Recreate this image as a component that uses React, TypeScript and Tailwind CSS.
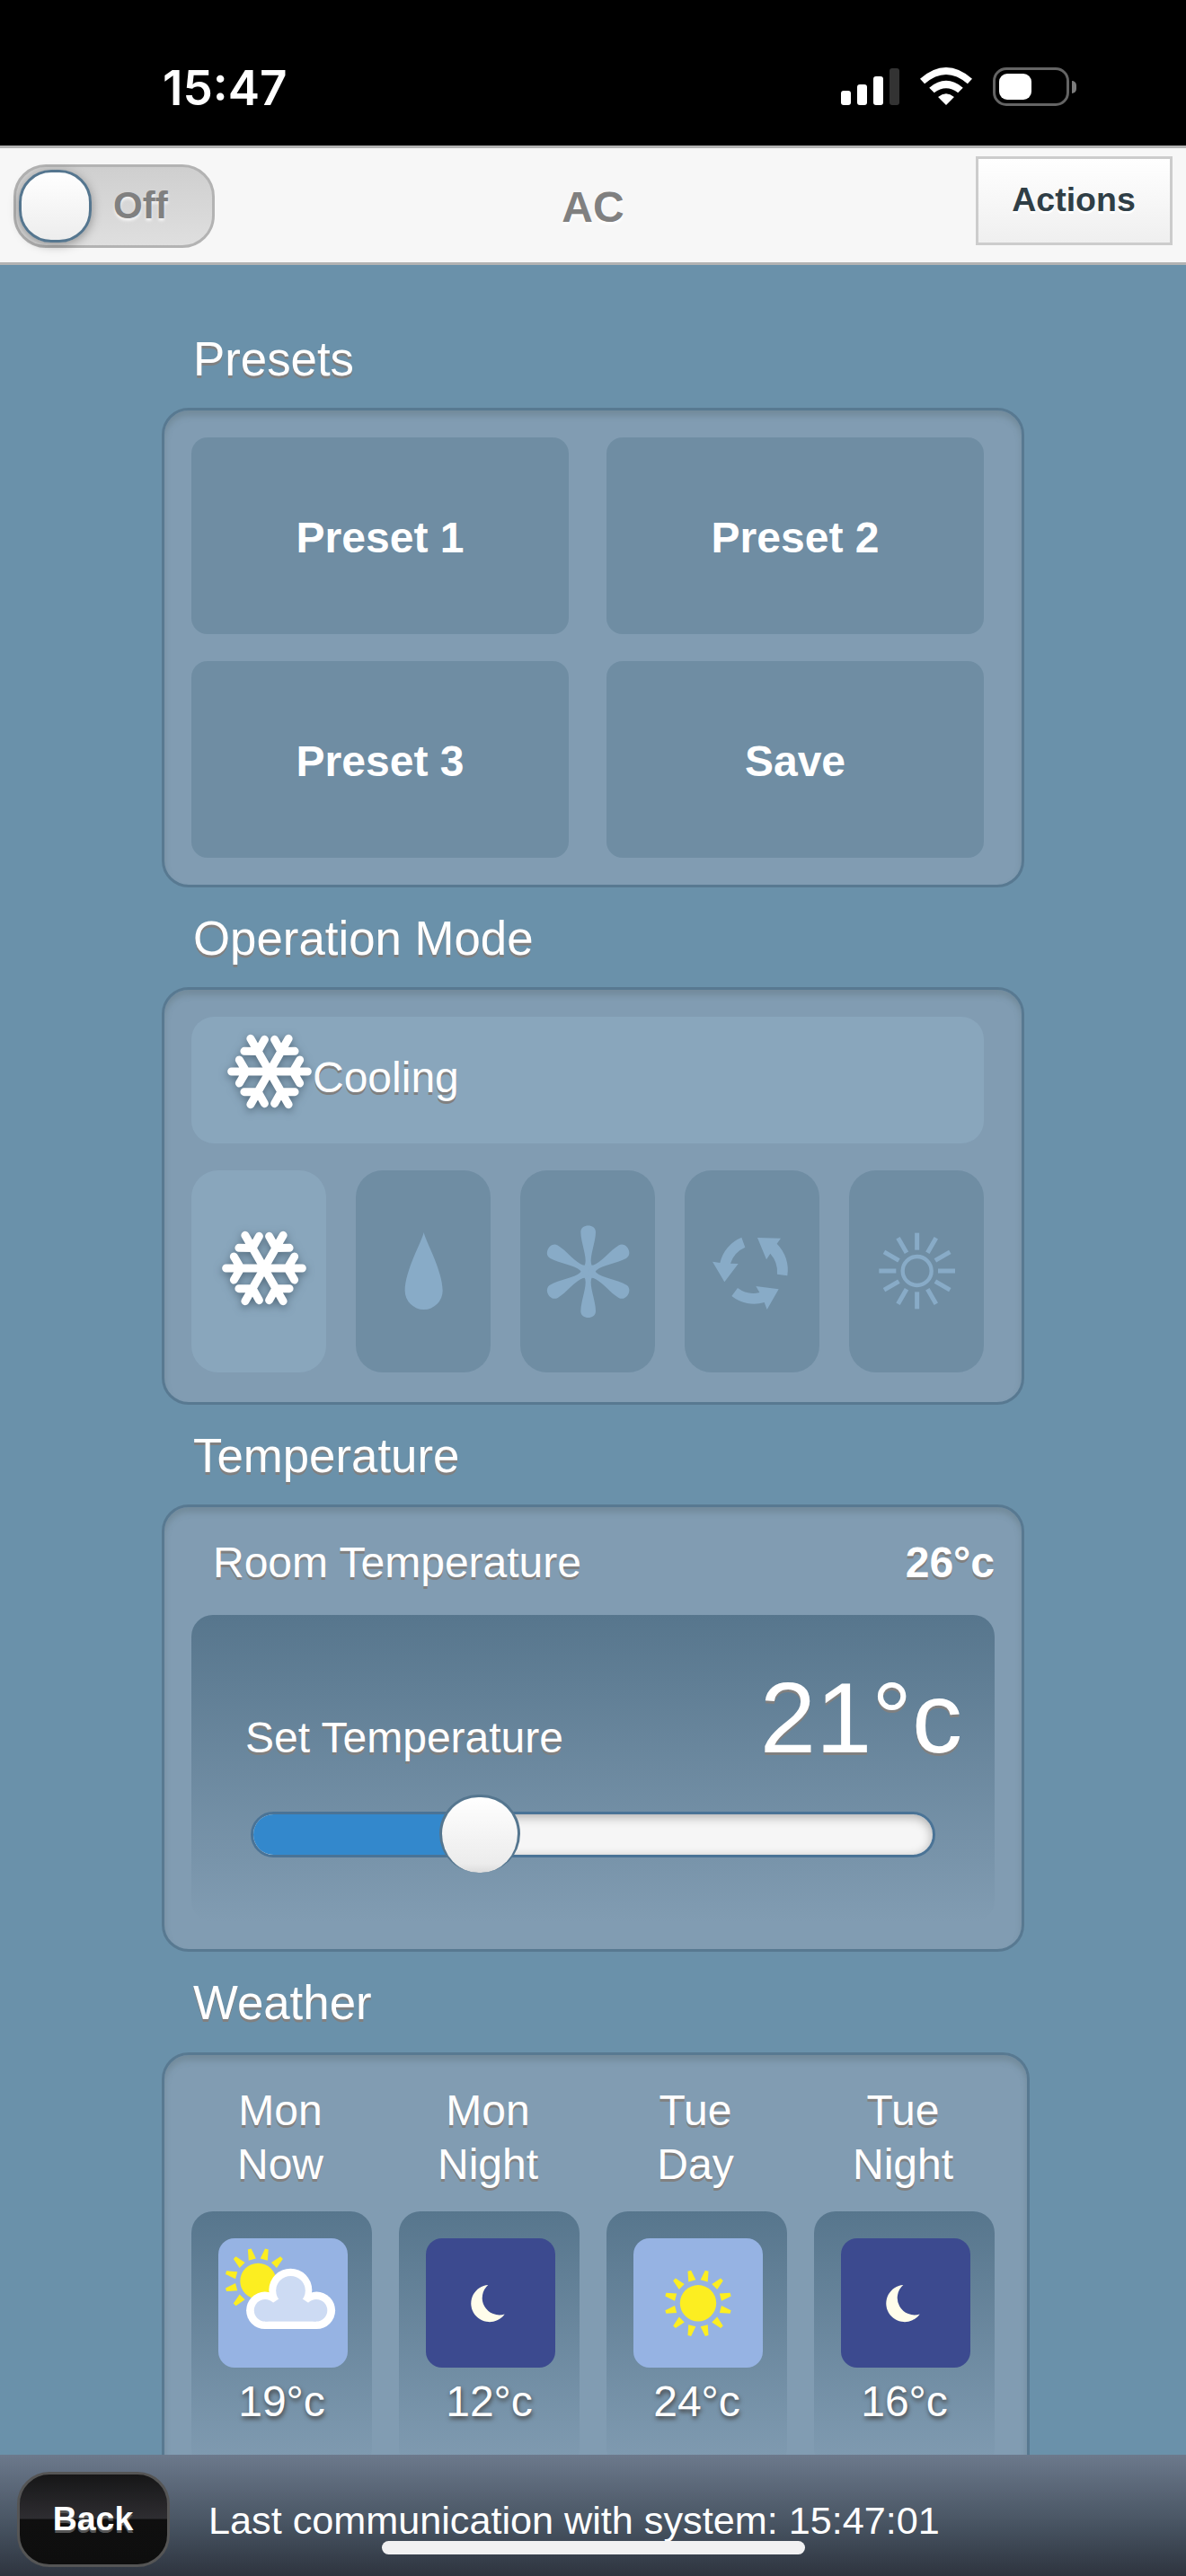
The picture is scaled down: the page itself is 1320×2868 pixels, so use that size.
import React from "react";

const PANEL =
  "rounded-[30px] border-[3px] border-[#587991] bg-[#819cb2] shadow-[inset_0_6px_6px_rgba(90,110,115,0.35)]";
const LABEL_SHADOW = "[text-shadow:0_3px_0_#808080]";

function SectionLabel({ children }: { children: React.ReactNode }) {
  return (
    <h2
      className={`flex h-[111px] shrink-0 items-center pt-[3px] pl-[35px] text-[52.8px] leading-none ${LABEL_SHADOW}`}
    >
      {children}
    </h2>
  );
}

function StatusBar() {
  return (
    <div className="flex h-[162px] shrink-0 items-start justify-between bg-black pr-[122px] pl-[181px]">
      <span className="pt-[67px] font-[Inter] text-[53px] leading-[62px] font-semibold">
        15:47
      </span>
      <div className="flex gap-[23px] pt-[75px]">
        <div className="flex h-[42px] items-end gap-[7px]">
          <span className="h-[16px] w-[11px] rounded-[3px] bg-white" />
          <span className="h-[23px] w-[11px] rounded-[3px] bg-white" />
          <span className="h-[32px] w-[11px] rounded-[3px] bg-white" />
          <span className="h-[41px] w-[11px] rounded-[3px] bg-[#333]" />
        </div>
        <svg className="h-[42px] w-[58px]" viewBox="0 0 136 126" preserveAspectRatio="none" fill="#fff">
          <path d="M0 38Q68-38 136 38L124 55Q68-7 12 55Z" />
          <path d="M24 68Q68 21 112 68L99 85Q68 55 37 85Z" />
          <path d="M47 99Q68 77 89 99L68 126Z" />
        </svg>
        <div className="flex items-center gap-[3px]">
          <div className="h-[43px] w-[85px] rounded-[15px] border-[3px] border-[#646464] p-[4px]">
            <div className="h-[29px] w-[36px] rounded-[9px] bg-white" />
          </div>
          <span className="h-[14px] w-[5px] rounded-r-full bg-[#7c7c7c]" />
        </div>
      </div>
    </div>
  );
}

function Header() {
  return (
    <header className="grid h-[133px] shrink-0 grid-cols-[1fr_auto_1fr] items-start border-y-[3px] border-[#b3b3b3] bg-[#f7f7f7] px-[15px]">
      <div className="mt-[18px] flex h-[93px] w-[224px] items-center rounded-[36px] border-[3px] border-[#b3b3b3] bg-linear-to-b from-[#cfcfcf] to-[#dfdfdf] pl-[3px]">
        <span className="h-[81px] w-[81px] rounded-[36px] border-[3px] border-[#55768f] bg-linear-to-b from-white to-[#ededed] shadow-[0_3px_12px_rgba(0,0,0,0.35)]" />
        <span className="pb-px pl-[24px] text-[42px] leading-none font-bold text-[#808080] [text-shadow:0_3px_3px_#f3f3f3]">
          Off
        </span>
      </div>
      <h1 className="pt-[2px] text-[48px] leading-[127px] font-bold text-[#808080] [text-shadow:0_3px_3px_#fff]">
        AC
      </h1>
      <button className="mt-[9px] flex h-[99px] w-[219px] items-center justify-center justify-self-end border-[3px] border-[#ccc] bg-linear-to-b from-white to-[#efefef] pr-px pb-px text-[37.5px] leading-none font-bold text-[#2f3e46] [text-shadow:0_3px_0_#fff]">
        Actions
      </button>
    </header>
  );
}

const FLAKE_ARMS = [0, 60, 120, 180, 240, 300];

function Snowflake() {
  return (
    <svg
      className="h-[96px] w-[96px] overflow-visible [filter:drop-shadow(0_3px_5px_rgba(50,70,85,0.6))]"
      viewBox="-144 -144 288 288"
    >
      <g stroke="#fff" strokeWidth="27" strokeLinecap="round" fill="none">
        {FLAKE_ARMS.map((a) => (
          <path key={a} transform={`rotate(${a})`} d="M0 0H127M78 0L101-39M78 0L101 39" />
        ))}
      </g>
    </svg>
  );
}

function Drop() {
  return (
    <path d="M227 207C232 235 290 335 290 402A63 63 0 0 1 164 402C164 335 222 235 227 207Z" fill="#88abc7" />
  );
}

function Asterisk() {
  return (
    <g transform="translate(227 338)" fill="#88abc7">
      {FLAKE_ARMS.map((a) => (
        <path
          key={a}
          transform={`rotate(${a})`}
          d="M-14 0C-12-12-14-20-10-26C-4-50-25-100-25-132C-25-161 25-161 25-132C25-100 4-50 10-26C14-20 12-12 14 0Z"
        />
      ))}
    </g>
  );
}

function Cycle() {
  return (
    <g transform="translate(-366 -669)" fill="#88abc7">
      <path d="M556 893A120 120 0 0 0 484 978L459 974L499 1042L545 981L519 980A88 88 0 0 1 568 926Z" />
      <path d="M609 894L687 896L674 914A125 125 0 0 1 709 1021L675 1016A92 92 0 0 0 652 947L639 967Z" />
      <path d="M543 1062L523 1089A120 120 0 0 0 632 1110L641 1134L680 1066L604 1056L616 1077A88 88 0 0 1 543 1062Z" />
    </g>
  );
}

const TWELVE = [0, 30, 60, 90, 120, 150, 180, 210, 240, 270, 300, 330];

function SunOutline() {
  return (
    <g transform="translate(227 336)" stroke="#88abc7" fill="none">
      <circle r="48" strokeWidth="13" />
      {TWELVE.map((a) => (
        <path key={a} transform={`rotate(${a})`} d="M0-70V-127" strokeWidth="15" />
      ))}
    </g>
  );
}

function ModeTile({ children }: { children: React.ReactNode }) {
  return (
    <button className="h-[225px] w-[150px] rounded-[30px] bg-[#6f8da3]">
      <svg className="h-full w-full" viewBox="0 0 450 675">
        {children}
      </svg>
    </button>
  );
}

function SunShape() {
  return (
    <g fill="#fcee21">
      <circle r="20.2" />
      {TWELVE.map((a) => (
        <path key={a} transform={`rotate(${a + 15})`} d="M-4.2-25.8L4.2-25.8L1.9-37.4L-1.9-37.4Z" />
      ))}
    </g>
  );
}

function PartlyCloudy() {
  return (
    <svg className="h-[144px] w-[144px] rounded-[18px] bg-[#96b3e3]" viewBox="0 0 144 144">
      <g transform="translate(44.3 47.7)">
        <circle r="20" fill="#fcee21" />
        {[-135, -105, -75, -45, -15, 15, 45].map((a) => (
          <path key={a} transform={`rotate(${a})`} d="M-4.2-25L4.2-25L1.9-37L-1.9-37Z" fill="#fcee21" />
        ))}
      </g>
      <g fill="#fff">
        <circle cx="51.8" cy="80.3" r="20.7" />
        <circle cx="109.4" cy="80.3" r="20.7" />
        <circle cx="80.3" cy="57.7" r="24" />
        <rect x="51.8" y="66" width="57.6" height="35" />
      </g>
      <g fill="#cddbf3">
        <circle cx="52.1" cy="80.3" r="12.3" />
        <circle cx="109" cy="80.3" r="12.3" />
        <circle cx="80.5" cy="58.3" r="16.3" />
        <rect x="52" y="75" width="57" height="17.6" />
        <path d="M59 76L61.3 71.6L68 67H93L99.7 71.6L102 76Z" />
      </g>
    </svg>
  );
}

function Moon() {
  return (
    <svg className="h-[144px] w-[144px] rounded-[18px] bg-[#3c4a8f]" viewBox="0 0 144 144">
      <path d="M69.3 52A20.6 20.6 0 1 0 87.7 84.4A19 19 0 0 1 69.3 52Z" fill="#fffdeb" />
    </svg>
  );
}

function Sunny() {
  return (
    <svg className="h-[144px] w-[144px] rounded-[18px] bg-[#96b3e3]" viewBox="-72 -72.3 144 144">
      <SunShape />
    </svg>
  );
}

const FORECAST = [
  { day: "Mon", part: "Now", temp: "19°c", icon: <PartlyCloudy /> },
  { day: "Mon", part: "Night", temp: "12°c", icon: <Moon /> },
  { day: "Tue", part: "Day", temp: "24°c", icon: <Sunny /> },
  { day: "Tue", part: "Night", temp: "16°c", icon: <Moon /> },
];

export default function App() {
  return (
    <div className="flex h-[2868px] w-[1320px] flex-col overflow-hidden bg-[#6a91aa] font-['Liberation_Sans',sans-serif] text-white">
      <StatusBar />
      <Header />

      <main className="flex h-[2438px] shrink-0 flex-col overflow-hidden pt-[48px] pl-[180px]">
        <SectionLabel>Presets</SectionLabel>
        <section className={`grid h-[534px] w-[960px] shrink-0 grid-cols-[420px_420px] gap-x-[42px] gap-y-[30px] p-[30px] ${PANEL}`}>
          {["Preset 1", "Preset 2", "Preset 3", "Save"].map((name) => (
            <button
              key={name}
              className="flex h-[219px] items-center justify-center rounded-[18px] bg-[#6f8da3] pt-[4px] text-[48px] leading-none font-bold"
            >
              {name}
            </button>
          ))}
        </section>

        <SectionLabel>Operation Mode</SectionLabel>
        <section className={`h-[465px] w-[960px] shrink-0 p-[30px] ${PANEL}`}>
          <div className="flex h-[141px] w-[882px] items-start rounded-[25px] bg-[#89a6bc] pt-[13px] pl-[39px]">
            <Snowflake />
            <span className={`pt-[31px] text-[48px] leading-none ${LABEL_SHADOW}`}>Cooling</span>
          </div>
          <div className="mt-[30px] flex gap-[33px]">
            <button className="flex h-[225px] w-[150px] items-center justify-center rounded-[30px] bg-[#89a6bc] pr-px pb-[8px] pl-[12px]">
              <Snowflake />
            </button>
            <ModeTile>
              <Drop />
            </ModeTile>
            <ModeTile>
              <Asterisk />
            </ModeTile>
            <ModeTile>
              <Cycle />
            </ModeTile>
            <ModeTile>
              <SunOutline />
            </ModeTile>
          </div>
        </section>

        <SectionLabel>Temperature</SectionLabel>
        <section className={`h-[498px] w-[960px] shrink-0 px-[30px] pb-[30px] ${PANEL}`}>
          <div className={`flex h-[120px] items-center justify-between pt-[3px] pl-[24px] text-[48px] leading-none ${LABEL_SHADOW}`}>
            <span>Room Temperature</span>
            <span className="font-bold">26°c</span>
          </div>
          <div className="h-[342px] rounded-[24px] bg-linear-to-b from-[#57768d] to-[#819cb2] pt-[59px]">
            <div className={`flex h-[112px] items-baseline justify-between pr-[36px] pl-[60px] ${LABEL_SHADOW}`}>
              <span className="text-[48px] leading-none">Set Temperature</span>
              <span className="text-[112px] leading-[112px]">21°c</span>
            </div>
            <div className="relative mt-[48px] ml-[66px] h-[51px] w-[762px] rounded-full border-[3px] border-[#4a7396] bg-[#f6f6f6] shadow-[inset_0_3px_12px_rgba(0,0,0,0.3)]">
              <div className="h-[45px] w-[255px] rounded-l-full bg-[#3388cc]" />
              <div className="absolute top-[-22px] left-[207px] h-[87px] w-[90px] rounded-full border-[3px] border-b-0 border-[#55768f] bg-linear-to-b from-white via-[#ececec] via-88% to-[#dcdcdc]" />
            </div>
          </div>
        </section>

        <SectionLabel>Weather</SectionLabel>
        <section className={`mt-px grid h-[525px] w-[966px] shrink-0 grid-cols-[201px_201px_201px_201px] gap-[30px] px-[30px] pt-[32px] ${PANEL}`}>
          {FORECAST.map((f, i) => (
            <div key={i} className="flex flex-col">
              <div className={`pr-[3px] text-center text-[48px] leading-[60px] ${LABEL_SHADOW}`}>
                <div>{f.day}</div>
                <div>{f.part}</div>
              </div>
              <div className="mt-[22px] flex h-[288px] flex-col items-center rounded-[24px] bg-linear-to-b from-[#57768d] to-[#819cb2] pt-[30px]">
                <div className="pl-[3px]">{f.icon}</div>
                <div className="mt-[8px] text-[48px] leading-[60px] [text-shadow:1px_3px_5px_#444]">{f.temp}</div>
              </div>
            </div>
          ))}
        </section>
      </main>

      <footer className="relative flex h-[135px] shrink-0 items-start bg-linear-to-b from-[#6c798c] via-[#465260] via-60% to-[#2e343f] pl-[19px]">
        <button className="mt-[19px] flex h-[106px] w-[170px] items-center justify-center rounded-[36px] border-[3px] border-[#555] bg-[linear-gradient(to_bottom,#161617_0%,#2e2d31_49%,#0f0f0f_50%,#0e0e0e_100%)] pr-px text-[37.5px] leading-none font-bold [text-shadow:0_3px_0_#555]">
          Back
        </button>
        <span className="mt-[51px] ml-[43px] text-[43.2px] leading-[44px]">
          Last communication with system: 15:47:01
        </span>
        <div className="absolute top-[96px] left-[425px] h-[15px] w-[471px] rounded-full bg-[#f1f1f2]" />
      </footer>
    </div>
  );
}
